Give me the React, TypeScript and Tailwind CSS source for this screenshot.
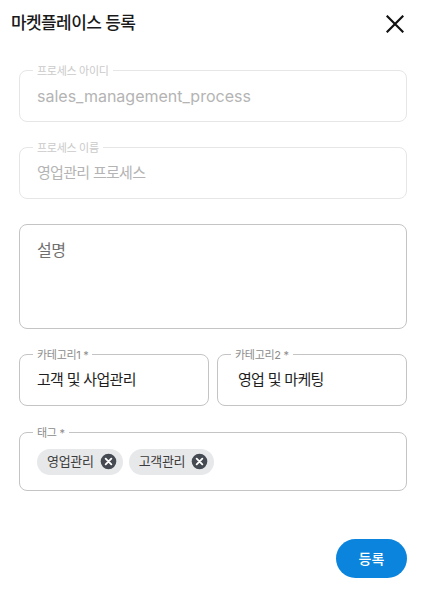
const FONT = "font-['Inter','Noto_Sans_CJK_KR',sans-serif]";

type FieldProps = {
  label?: string;
  value: string;
  disabled?: boolean;
  latin?: boolean;
  valueClassName?: string;
};

const OutlinedField = ({ label, value, disabled, latin, valueClassName }: FieldProps) => {
  return (
    <div
      className={`relative flex h-[52px] items-center rounded-lg border px-[17px] ${
        disabled ? "border-[#e6e6e6]" : "border-[#c4c4c4]"
      }`}
    >
      {label && (
        <span
          className={`absolute left-[13px] top-0 -translate-y-1/2 bg-white px-1 text-[11px] leading-4 tracking-[-0.3px] ${
            disabled ? "text-[#cacaca]" : "text-[#8c8c8c]"
          }`}
        >
          {label}
        </span>
      )}
      <span
        className={`leading-6 ${latin ? "text-base" : "text-[15px] tracking-[-0.7px]"} ${
          disabled ? "text-[#b4b4b4]" : "text-[#1e1e1e]"
        } ${valueClassName ?? ""}`}
      >
        {value}
      </span>
    </div>
  );
};

const Chip = ({ text }: { text: string }) => {
  return (
    <div className="flex h-[26px] items-center gap-[6px] rounded-full bg-[#e7e8ea] pl-[10px] pr-[6px]">
      <span className="text-[13px] tracking-[-0.3px] text-[#3c3c3c]">{text}</span>
      <svg width="17" height="17" viewBox="0 0 24 24">
        <circle cx="12" cy="12" r="11" fill="#454a52" />
        <path d="M8 8l8 8M16 8l-8 8" stroke="#fff" strokeWidth="2.6" strokeLinecap="round" />
      </svg>
    </div>
  );
};

export default function App() {
  return (
    <div className={`flex h-[598px] w-[424px] flex-col bg-white ${FONT}`}>
      <div className="flex h-[48px] items-center justify-between pl-[11px] pr-[20px]">
        <h1 className="text-[17px] font-medium tracking-[-0.6px] text-[#1a1a1a]">마켓플레이스 등록</h1>
        <svg width="18" height="18" viewBox="0 0 18 18" className="mt-[-1px]">
          <path d="M1.5 1.5l15 15M16.5 1.5l-15 15" stroke="#111" strokeWidth="2.2" strokeLinecap="square" />
        </svg>
      </div>

      <div className="mt-[22px] flex flex-col pl-[19px] pr-[17px]">
        <div className="flex flex-col gap-[25px]">
          <OutlinedField label="프로세스 아이디" value="sales_management_process" disabled latin />
          <OutlinedField label="프로세스 이름" value="영업관리 프로세스" disabled />
          <div className="h-[105px] rounded-lg border border-[#c4c4c4] px-[17px] pt-[13px]">
            <span className="text-base leading-6 tracking-[-0.5px] text-[#6f6f6f]">설명</span>
          </div>
          <div className="grid grid-cols-2 gap-2">
            <OutlinedField label="카테고리1 *" value="고객 및 사업관리" />
            <OutlinedField label="카테고리2 *" value="영업 및 마케팅" valueClassName="ml-[3px]" />
          </div>
        </div>

        <div className="relative mt-[26px] flex h-[59px] items-center gap-[6px] rounded-lg border border-[#c4c4c4] px-[17px]">
          <span className="absolute left-[13px] top-0 -translate-y-1/2 bg-white px-1 text-[11px] leading-4 tracking-[-0.3px] text-[#8c8c8c]">
            태그 *
          </span>
          <Chip text="영업관리" />
          <Chip text="고객관리" />
        </div>

        <button className="mt-[48px] h-[39px] w-[71px] self-end rounded-full bg-[#0a84dc] text-[14px] font-medium text-white">
          등록
        </button>
      </div>
    </div>
  );
}
